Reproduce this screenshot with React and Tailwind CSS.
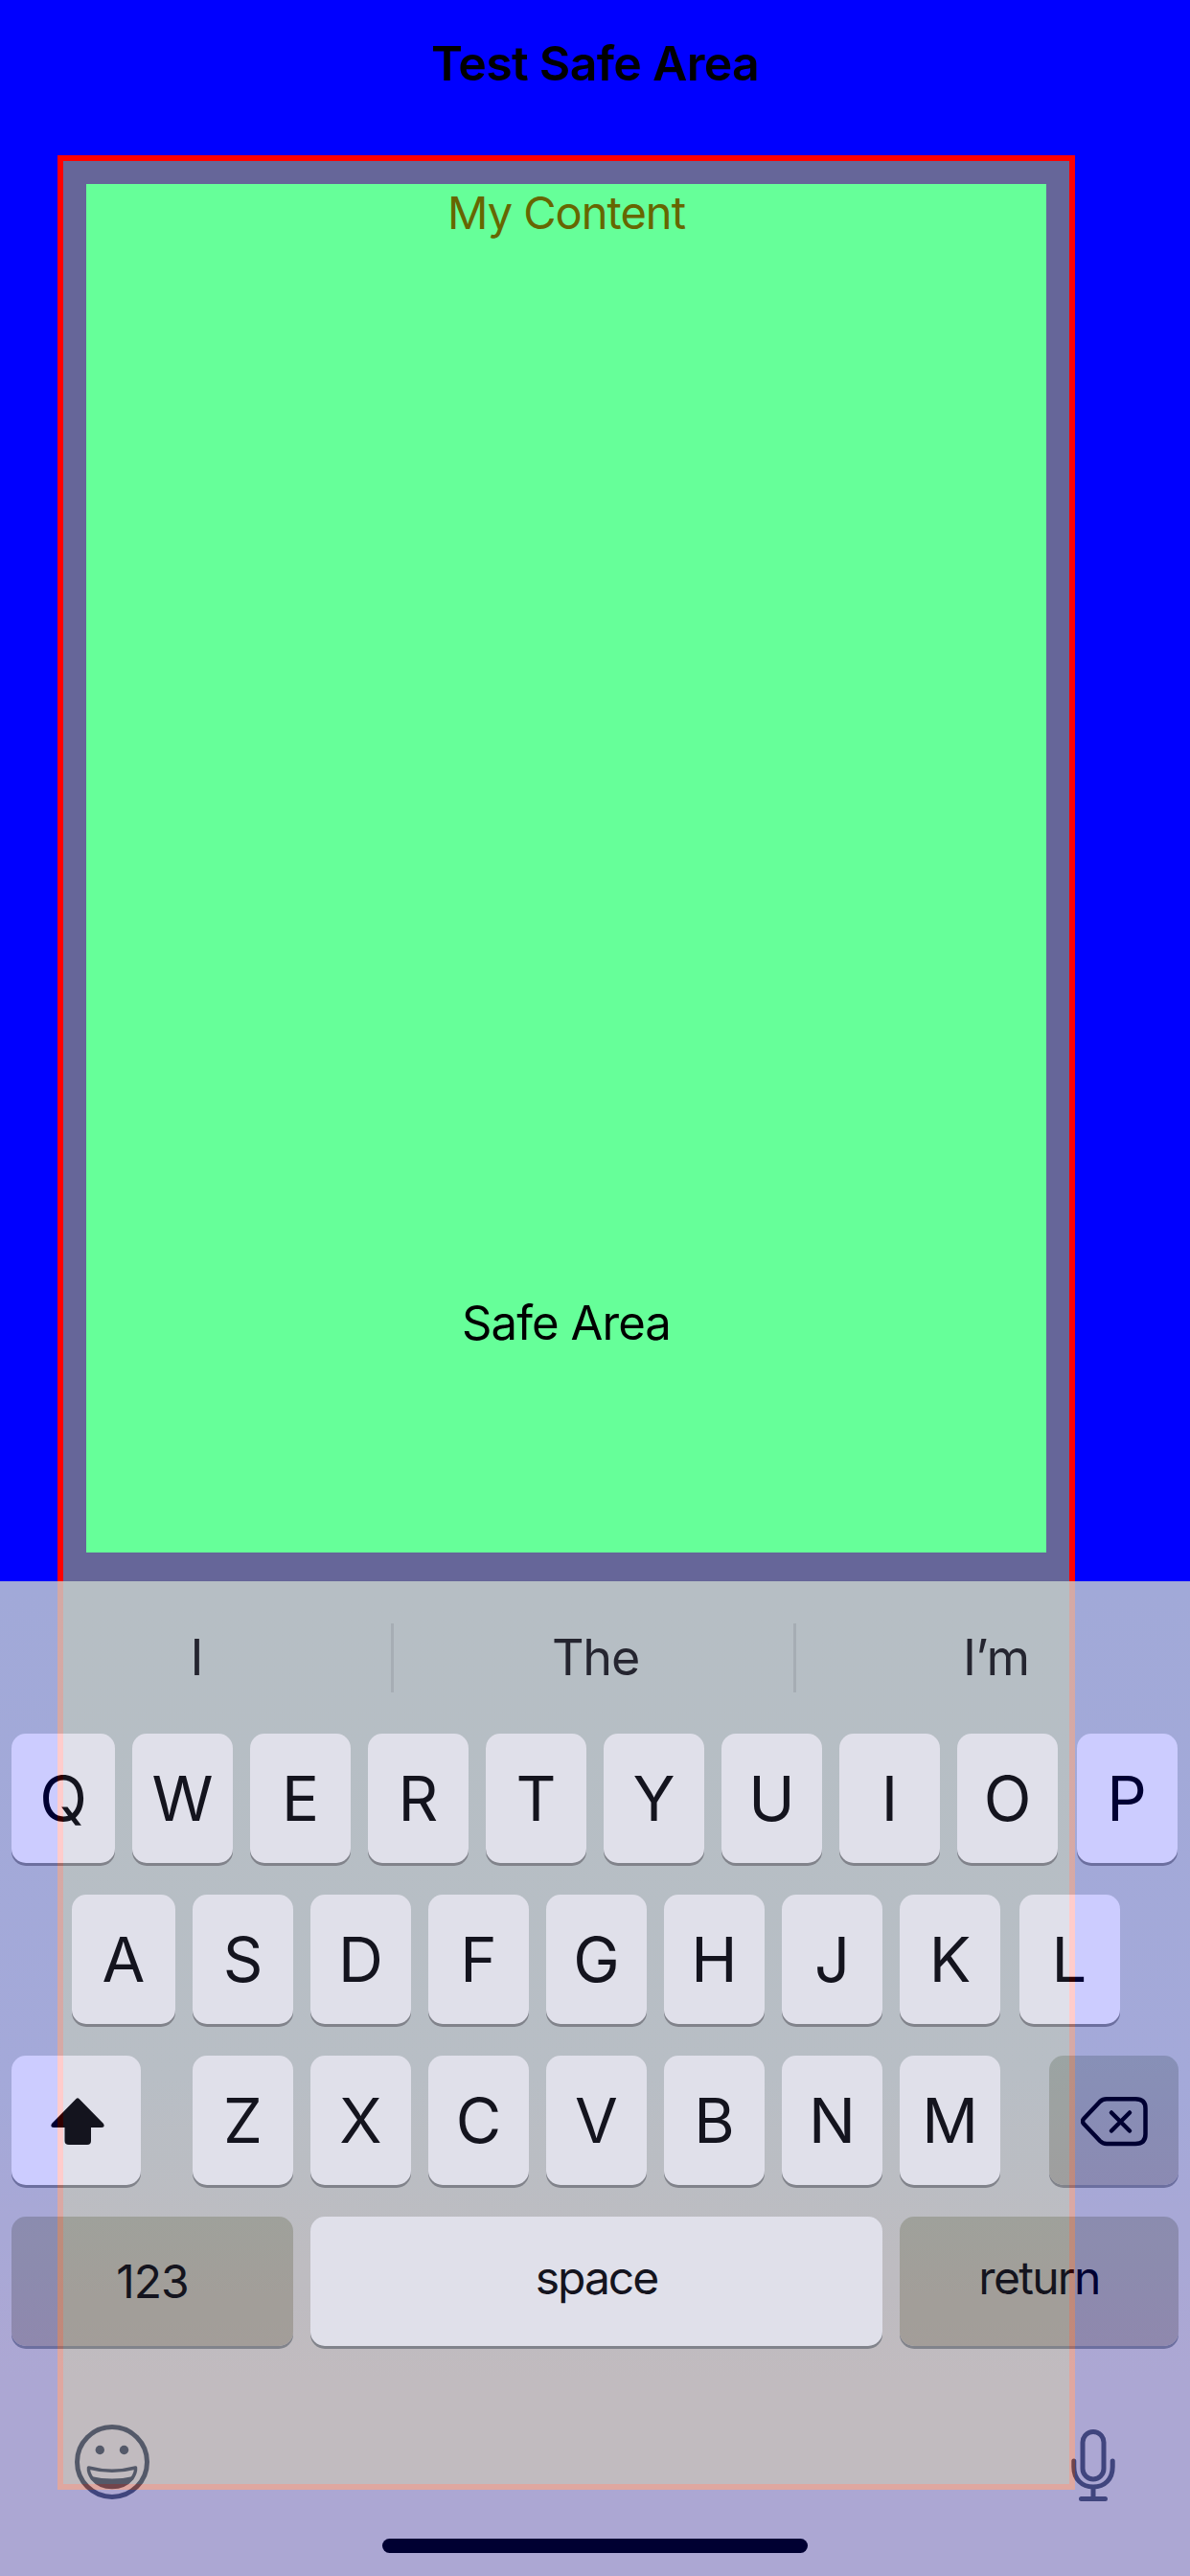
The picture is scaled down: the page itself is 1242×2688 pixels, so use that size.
const letter =
  "h-[135px] w-[105px] shrink-0 rounded-[15px] bg-white text-[65px] shadow-[0_3px_0_#888b88] flex items-center justify-center";
const wide =
  "h-[135px] shrink-0 rounded-[15px] shadow-[0_3px_0_#888b88] flex items-center justify-center text-[48px]";

function Key({ char, className = "" }) {
  return <div className={letter + " " + className}>{char}</div>;
}

function ShiftIcon() {
  return (
    <svg width="56" height="50" viewBox="0 0 56 50" className="relative left-[1.5px] top-px">
      <path d="M26.5 1Q28 -.3 29.5 1L55 27Q57 31 53 31H42V45Q42 49 38 49H19Q14.500 49 14.500 45V31H3Q-1 31 1 27Z" fill="black" />
    </svg>
  );
}

function DeleteIcon() {
  return (
    <svg width="70" height="52" viewBox="0 0 70 52" fill="none" stroke="black" strokeWidth="4.500" strokeLinecap="round" strokeLinejoin="round" className="relative left-[0.5px] top-[1.500px]">
      <path d="M20 5Q23 2.300 27 2.300H57Q67.500 2.300 67.500 12V39Q67.500 49 57 49H27Q23 49 20 46L3 28Q1 25.600 3 23Z" />
      <path d="M32 16.500L51 35.500M51 16.500L32 35.500" />
    </svg>
  );
}

function EmojiIcon() {
  return (
    <svg width="78" height="78" viewBox="0 0 78 78" fill="none">
      <circle cx="39" cy="39" r="36.500" stroke="#50575e" strokeWidth="5" />
      <circle cx="26.300" cy="26.500" r="4.700" fill="#50575e" />
      <circle cx="51.500" cy="26.500" r="4.700" fill="#50575e" />
      <path d="M14.500 45Q39 51.500 63.500 45Q64 50 60 56Q52 65.500 39 65.500Q26 65.500 18 56Q14 50 14.500 45Z" stroke="#50575e" strokeWidth="3.500" strokeLinejoin="round" />
      <path d="M17 54Q39 59 61 54Q54 66 39 66Q24 66 17 54Z" fill="#50575e" />
    </svg>
  );
}

function MicIcon() {
  return (
    <svg width="46" height="76" viewBox="0 0 46 76" fill="none" stroke="#50575e" strokeWidth="5" strokeLinecap="round">
      <rect x="12" y="2.500" width="22" height="49.500" rx="11" />
      <path d="M2.800 33V39C2.800 52 11 60 23 60S43.200 52 43.200 39V33M23 60V72.500M10.500 72.500H35.500" />
    </svg>
  );
}

function Keyboard() {
  return (
    <div className="absolute bottom-0 left-0 flex h-[1038px] w-full flex-col bg-linear-to-b from-[#cad4cf] via-[#cdd4d0] via-50% to-[#d8d1c9] to-80% pl-3 text-black opacity-80">
      <div className="-ml-3 flex h-[159px] items-center text-[52px] text-[#161616]">
        <div className="w-[408px] pl-[3px] text-center">I</div>
        <div className="h-[72px] w-[3px] bg-[#b7bfbb]" />
        <div className="w-[417px] pl-1 text-center tracking-[-1.2px]">The</div>
        <div className="h-[72px] w-[3px] bg-[#b7bfbb]" />
        <div className="w-[411px] pl-[6px] text-center tracking-[-1px]">I’m</div>
      </div>
      <div className="flex gap-[18px]">
        <Key char="Q" className="w-[108px]" />
        {"WERTYUIO".split("").map((c) => <Key key={c} char={c} />)}
        <Key char="P" className="ml-[1.500px]" />
      </div>
      <div className="mt-[33px] ml-[63px] flex gap-[18px]">
        <Key char="A" className="w-[108px]" />
        {"SDFGHJK".split("").map((c) => <Key key={c} char={c} />)}
        <Key char="L" className="ml-[1.500px]" />
      </div>
      <div className="mt-[33px] flex gap-[18px]">
        <div className={wide + " mr-9 w-[135px] bg-white"}><ShiftIcon /></div>
        {"ZXCVBNM".split("").map((c) => <Key key={c} char={c} />)}
        <div className={wide + " ml-[33px] w-[135px] bg-linear-to-b from-[#a9b4a6] to-[#aeada0]"}><DeleteIcon /></div>
      </div>
      <div className="mt-[33px] flex gap-[18px]">
        <div className={wide + " w-[294px] bg-linear-to-b from-[#aeb09c] to-[#b3ab99] tracking-[-1px]"}>123</div>
        <div className={wide + " w-[597px] bg-white pb-2 tracking-[-2px]"}>space</div>
        <div className={wide + " w-[291px] bg-linear-to-b from-[#aeb09c] to-[#b3ab99] pb-2 tracking-[-1.7px]"}>return</div>
      </div>
      <div className="mt-[82px] flex h-[80px] items-start justify-between pr-[78px] pl-[66px]">
        <EmojiIcon />
        <div className="pt-[5px]"><MicIcon /></div>
      </div>
      <div className="mt-[39px] ml-[387px] h-[15px] w-[444px] rounded-full bg-black" />
    </div>
  );
}

export default function App() {
  return (
    <div className="relative h-[2688px] w-[1242px] overflow-hidden bg-[#0000ff] font-['Inter',sans-serif] text-black">
      <header className="flex h-[162px] items-start justify-center pt-[36px]">
        <h1 className="text-[50px] leading-[60px] font-semibold tracking-[-0.7px]">Test Safe Area</h1>
      </header>
      <main className="ml-[60px] h-[2436px] w-[1062px] border-[6px] border-[#ff0000] bg-[#666699] p-6">
        <div className="flex h-[1428px] flex-col items-center bg-[#66ff99] text-[49px] leading-[60px]">
          <div className="text-[47px] tracking-[-1px] text-[#666600]">My Content</div>
          <div className="mt-[1099px] tracking-[-0.9px]">Safe Area</div>
        </div>
      </main>
      <Keyboard />
    </div>
  );
}
